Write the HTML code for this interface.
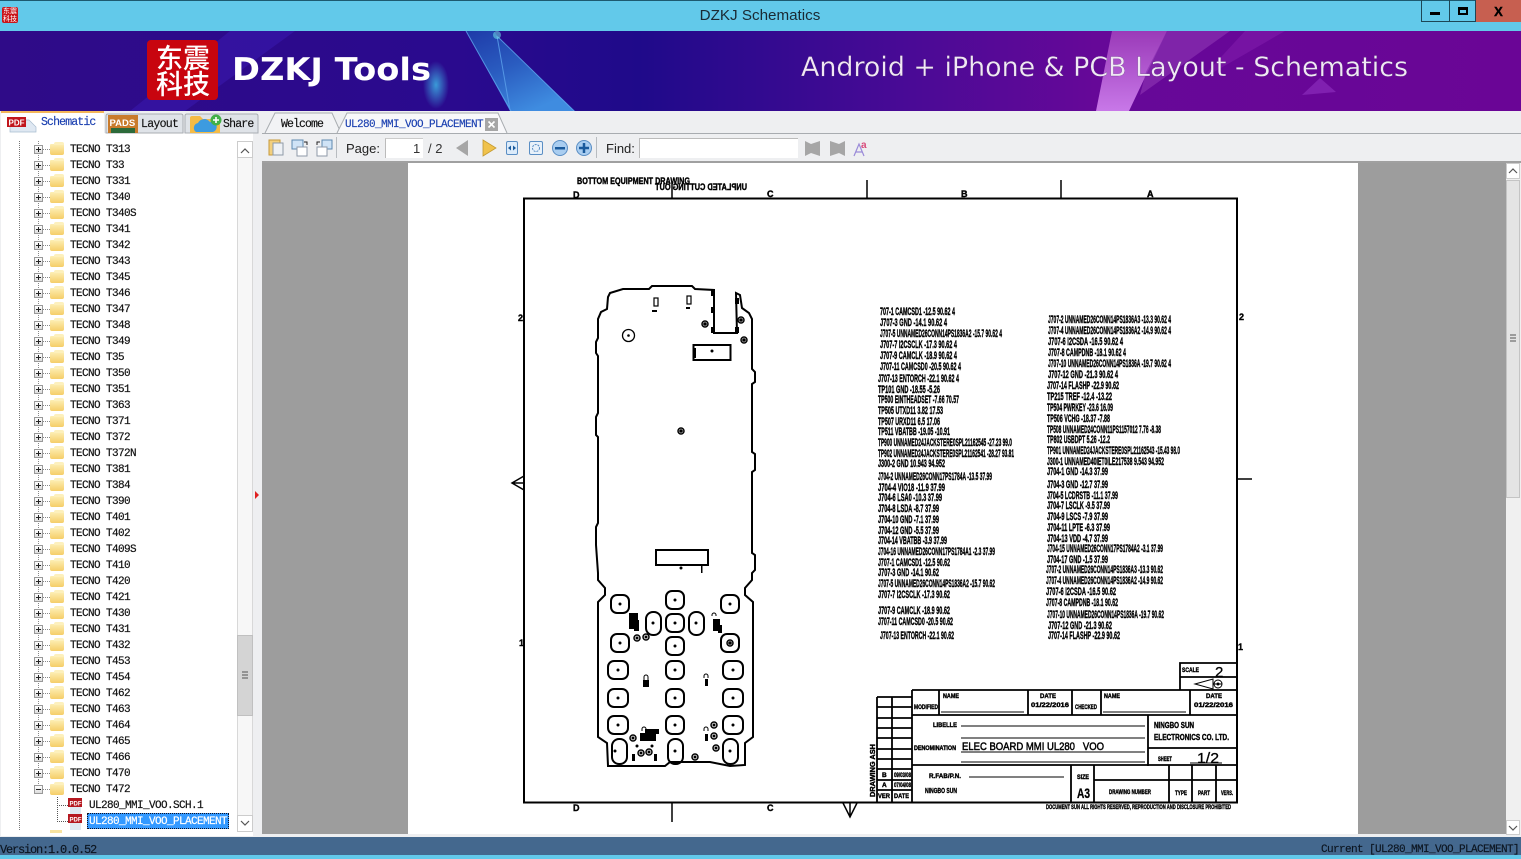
<!DOCTYPE html>
<html><head><meta charset="utf-8"><title>DZKJ Schematics</title>
<style>
html,body{margin:0;padding:0;width:1521px;height:859px;overflow:hidden;background:#62c9ea;font-family:"Liberation Sans",sans-serif}
.a{position:absolute}
svg{position:absolute;left:0;top:0;overflow:visible}
.r{position:absolute;left:0;width:236px;height:16px;font:11px/18px "Liberation Mono",monospace;letter-spacing:-.6px;color:#111;padding-left:70px;box-sizing:border-box;white-space:pre;-webkit-text-stroke:.2px #111}
.r b{position:absolute;left:34px;top:4px;width:9px;height:9px;box-sizing:border-box;border:1px solid #999;background:linear-gradient(#fff,#ddd)}
.r b:before{content:"";position:absolute;left:1px;top:3px;width:5px;height:1px;background:#222}
.r b:after{content:"";position:absolute;left:3px;top:1px;width:1px;height:5px;background:#222}
.r b.m:after{display:none}
.r u{position:absolute;left:43px;top:8px;width:7px;height:1px;background:repeating-linear-gradient(90deg,#888 0 1px,transparent 1px 2px)}
.r i{position:absolute;left:50px;top:3px;width:14px;height:11px;background:linear-gradient(#fdeeb4,#f5cd68);border-radius:1px 1px 2px 2px}
.r i:before{content:"";position:absolute;right:0;top:-2px;width:10px;height:3px;background:#fdf0bc;border-radius:2px 2px 0 0}
.p{position:absolute;font:11px/18px "Liberation Mono",monospace;letter-spacing:-.6px;white-space:pre;color:#111;-webkit-text-stroke:.2px currentColor}
.t{position:absolute;font:11px/14px "Liberation Mono",monospace;white-space:pre;-webkit-text-stroke:.15px currentColor}
.d text{font-family:"Liberation Sans",sans-serif;font-weight:700;font-size:11px;fill:#000;stroke:#000;stroke-width:.4}
</style></head>
<body>
<!-- title bar -->
<div class="a" style="left:0;top:0;width:1521px;height:31px;background:#62c9ea;border-top:1px solid #1d5a70;box-sizing:border-box"></div>
<div class="a" style="left:2px;top:7px;width:16px;height:16px;background:#c9151b;border-radius:2px;color:#fff;font:7px/8px 'Noto Sans CJK SC',sans-serif;text-align:center;word-break:break-all">东震科技</div>
<div class="a" style="left:600px;top:6px;width:320px;text-align:center;font-size:15.2px;line-height:19px;color:#1a2a33">DZKJ Schematics</div>
<div class="a" style="left:1421px;top:0;width:29px;height:22px;border:1px solid #1d4656;border-top:0;box-sizing:border-box"></div>
<div class="a" style="left:1430px;top:12px;width:10px;height:3px;background:#000"></div>
<div class="a" style="left:1449px;top:0;width:27px;height:22px;border:1px solid #1d4656;border-left:0;border-top:0;box-sizing:border-box"></div>
<div class="a" style="left:1458px;top:7px;width:10px;height:8px;border:2px solid #000;border-top-width:3px;box-sizing:border-box"></div>
<div class="a" style="left:1476px;top:0;width:45px;height:22px;background:#c75f50"></div>
<div class="a" style="left:1476px;top:1px;width:45px;text-align:center;font:700 13px/21px 'Liberation Sans',sans-serif;color:#000;-webkit-text-stroke:.4px #000">X</div>

<!-- banner -->
<svg width="1521" height="859" viewBox="0 0 1521 859">
<defs>
<linearGradient id="bg" x1="0" x2="1" y1="0" y2="0"><stop offset="0" stop-color="#2f0b88"/><stop offset=".3" stop-color="#2a0a8e"/><stop offset=".42" stop-color="#1f0a8a"/><stop offset=".6" stop-color="#4a0a96"/><stop offset=".72" stop-color="#660898"/><stop offset="1" stop-color="#6a0596"/></linearGradient>
<linearGradient id="bl" x1="0" x2=".6" y1="0" y2="1"><stop offset="0" stop-color="#1e3aa8"/><stop offset=".5" stop-color="#2a5cc0"/><stop offset="1" stop-color="#3f8ce0"/></linearGradient>
<linearGradient id="pk" x1="0" x2="0" y1="0" y2="1"><stop offset="0" stop-color="#9a3ab8"/><stop offset="1" stop-color="#c878e8"/></linearGradient>
<radialGradient id="gl"><stop offset="0" stop-color="#3a9ad8"/><stop offset="1" stop-color="#3a9ad8" stop-opacity="0"/></radialGradient>
</defs>
<rect x="0" y="31" width="1521" height="80" fill="url(#bg)"/>
<polygon points="230,31 295,31 185,111 130,111" fill="#3a1ab0" opacity=".55"/>
<polygon points="466,31 494,31 498,37 575,111 510,111" fill="url(#bl)"/>
<path d="M497 36L510 110M466 31L511 111M498 37L574 111" stroke="#5aa0ea" stroke-width="1" fill="none" opacity=".85"/>
<circle cx="497" cy="35" r="4" fill="#6fe0e8" opacity=".55"/>
<ellipse cx="436" cy="85" rx="13" ry="24" fill="url(#gl)"/>
<polygon points="1112,31 1167,31 1129,111 1096,111" fill="url(#pk)"/>
<polygon points="1167,31 1230,31 1140,95 1146,72" fill="#8a30b0" opacity=".7"/>
<polygon points="1245,31 1285,31 1200,80" fill="#7d18a8" opacity=".7"/>
<polygon points="1302,95 1320,78 1336,92" fill="#8020b0"/>
<text x="801" y="76" textLength="607" lengthAdjust="spacingAndGlyphs" font-family="'DejaVu Sans',sans-serif" font-size="27" fill="#f0e8f4" stroke="#3a1060" stroke-width=".2">Android + iPhone &amp; PCB Layout - Schematics</text>
<rect x="147" y="40" width="71" height="60" rx="4" fill="#c8050f"/>
<text x="232" y="80" textLength="199" lengthAdjust="spacingAndGlyphs" font-family="'DejaVu Sans',sans-serif" font-weight="700" font-size="31" fill="#fff">DZKJ Tools</text>
</svg>
<div class="a" style="left:152px;top:44px;width:62px;font:500 27px/26px 'Noto Sans CJK SC',sans-serif;color:#fff;word-break:break-all;text-align:center">东震<br>科技</div>

<!-- tab bar and toolbar backgrounds -->
<div class="a" style="left:0;top:111px;width:1521px;height:726px;background:#eeeff1"></div>
<div class="a" style="left:258px;top:133px;width:1263px;height:1px;background:#a8acb0"></div>
<div class="a" style="left:262px;top:161px;width:1259px;height:2px;background:#a0a0a0"></div>
<div class="a" style="left:385px;top:138px;width:38px;height:20px;background:#fff;border-left:1px solid #bbb;border-top:1px solid #ccc;box-sizing:border-box"></div>
<div class="a" style="left:639px;top:138px;width:159px;height:20px;background:#fff;border:1px solid #bbb;border-right:0;border-bottom:0;box-sizing:border-box"></div>
<!-- viewer area -->
<div class="a" style="left:262px;top:163px;width:1244px;height:671px;background:#9d9d9d"></div>
<div class="a" style="left:408px;top:163px;width:950px;height:671px;background:#fff"></div>
<!-- viewer scrollbar -->
<div class="a" style="left:1506px;top:163px;width:15px;height:671px;background:#f0f0f0"></div>
<div class="a" style="left:1506px;top:163px;width:14px;height:16px;background:#fff;border:1px solid #ccc;box-sizing:border-box"></div>
<div class="a" style="left:1506px;top:180px;width:14px;height:318px;background:#e4e4e4;border:1px solid #c4c4c4;box-sizing:border-box"></div>
<div class="a" style="left:1506px;top:820px;width:14px;height:15px;background:#fff;border:1px solid #ccc;box-sizing:border-box"></div>

<!-- left panel -->
<div class="a" style="left:1px;top:133px;width:252px;height:703px;background:#fff"></div>
<div class="a" style="left:253px;top:133px;width:9px;height:703px;background:#eeeff1"></div>
<div class="a" style="left:19px;top:141px;width:1px;height:690px;background:repeating-linear-gradient(#777 0 1px,transparent 1px 2px)"></div>
<div class="a" style="left:38px;top:141px;width:1px;height:648px;background:repeating-linear-gradient(#888 0 1px,transparent 1px 2px)"></div>
<div class="a" style="left:57px;top:797px;width:1px;height:24px;background:repeating-linear-gradient(#555 0 1px,transparent 1px 2px)"></div>
<div class="a" style="left:57px;top:805px;width:11px;height:1px;background:repeating-linear-gradient(90deg,#555 0 1px,transparent 1px 2px)"></div>
<div class="a" style="left:57px;top:821px;width:11px;height:1px;background:repeating-linear-gradient(90deg,#555 0 1px,transparent 1px 2px)"></div>

<div class="r" style="top:141px"><b></b><u></u><i></i>TECNO T313</div>
<div class="r" style="top:157px"><b></b><u></u><i></i>TECNO T33</div>
<div class="r" style="top:173px"><b></b><u></u><i></i>TECNO T331</div>
<div class="r" style="top:189px"><b></b><u></u><i></i>TECNO T340</div>
<div class="r" style="top:205px"><b></b><u></u><i></i>TECNO T340S</div>
<div class="r" style="top:221px"><b></b><u></u><i></i>TECNO T341</div>
<div class="r" style="top:237px"><b></b><u></u><i></i>TECNO T342</div>
<div class="r" style="top:253px"><b></b><u></u><i></i>TECNO T343</div>
<div class="r" style="top:269px"><b></b><u></u><i></i>TECNO T345</div>
<div class="r" style="top:285px"><b></b><u></u><i></i>TECNO T346</div>
<div class="r" style="top:301px"><b></b><u></u><i></i>TECNO T347</div>
<div class="r" style="top:317px"><b></b><u></u><i></i>TECNO T348</div>
<div class="r" style="top:333px"><b></b><u></u><i></i>TECNO T349</div>
<div class="r" style="top:349px"><b></b><u></u><i></i>TECNO T35</div>
<div class="r" style="top:365px"><b></b><u></u><i></i>TECNO T350</div>
<div class="r" style="top:381px"><b></b><u></u><i></i>TECNO T351</div>
<div class="r" style="top:397px"><b></b><u></u><i></i>TECNO T363</div>
<div class="r" style="top:413px"><b></b><u></u><i></i>TECNO T371</div>
<div class="r" style="top:429px"><b></b><u></u><i></i>TECNO T372</div>
<div class="r" style="top:445px"><b></b><u></u><i></i>TECNO T372N</div>
<div class="r" style="top:461px"><b></b><u></u><i></i>TECNO T381</div>
<div class="r" style="top:477px"><b></b><u></u><i></i>TECNO T384</div>
<div class="r" style="top:493px"><b></b><u></u><i></i>TECNO T390</div>
<div class="r" style="top:509px"><b></b><u></u><i></i>TECNO T401</div>
<div class="r" style="top:525px"><b></b><u></u><i></i>TECNO T402</div>
<div class="r" style="top:541px"><b></b><u></u><i></i>TECNO T409S</div>
<div class="r" style="top:557px"><b></b><u></u><i></i>TECNO T410</div>
<div class="r" style="top:573px"><b></b><u></u><i></i>TECNO T420</div>
<div class="r" style="top:589px"><b></b><u></u><i></i>TECNO T421</div>
<div class="r" style="top:605px"><b></b><u></u><i></i>TECNO T430</div>
<div class="r" style="top:621px"><b></b><u></u><i></i>TECNO T431</div>
<div class="r" style="top:637px"><b></b><u></u><i></i>TECNO T432</div>
<div class="r" style="top:653px"><b></b><u></u><i></i>TECNO T453</div>
<div class="r" style="top:669px"><b></b><u></u><i></i>TECNO T454</div>
<div class="r" style="top:685px"><b></b><u></u><i></i>TECNO T462</div>
<div class="r" style="top:701px"><b></b><u></u><i></i>TECNO T463</div>
<div class="r" style="top:717px"><b></b><u></u><i></i>TECNO T464</div>
<div class="r" style="top:733px"><b></b><u></u><i></i>TECNO T465</div>
<div class="r" style="top:749px"><b></b><u></u><i></i>TECNO T466</div>
<div class="r" style="top:765px"><b></b><u></u><i></i>TECNO T470</div>
<div class="r" style="top:781px"><b class="m"></b><u></u><i></i>TECNO T472</div>
<div class="a" style="left:50px;top:830px;width:12px;height:3px;background:#f8e3a0"></div>

<svg width="1521" height="859" viewBox="0 0 1521 859">
<g><rect x="70" y="802" width="11" height="12" fill="#dfe9f2"/><rect x="68" y="798" width="14" height="9" fill="#b51820"/><text x="69.5" y="805.5" font-size="6" font-weight="700" fill="#fff" font-family="'Liberation Sans',sans-serif">PDF</text></g>
<g><rect x="70" y="818" width="11" height="12" fill="#dfe9f2"/><rect x="68" y="814" width="14" height="9" fill="#b51820"/><text x="69.5" y="821.5" font-size="6" font-weight="700" fill="#fff" font-family="'Liberation Sans',sans-serif">PDF</text></g>
</svg>
<div class="p" style="left:89px;top:797px">UL280_MMI_VOO.SCH.1</div>
<div class="a" style="left:87px;top:813px;width:142px;height:16px;background:#3399ff;outline:1px dotted #112;outline-offset:-1px"></div>
<div class="p" style="left:89px;top:813px;color:#fff">UL280_MMI_VOO_PLACEMENT</div>

<!-- tree scrollbar -->
<div class="a" style="left:237px;top:141px;width:16px;height:691px;background:#f7f7f7;border:1px solid #d8d8d8;box-sizing:border-box"></div>
<div class="a" style="left:237px;top:141px;width:16px;height:17px;background:#fff;border:1px solid #ccc;box-sizing:border-box"></div>
<div class="a" style="left:237px;top:815px;width:16px;height:17px;background:#fff;border:1px solid #ccc;box-sizing:border-box"></div>
<div class="a" style="left:237px;top:635px;width:16px;height:81px;background:#d4d4d4;border:1px solid #c0c0c0;box-sizing:border-box"></div>

<!-- tabs, toolbar icons -->
<svg width="1521" height="859" viewBox="0 0 1521 859">
<path d="M241 153l4-4 4 4M241 821l4 4 4-4M1509 173l4-4 4 4M1509 826l4 4 4-4" fill="none" stroke="#555" stroke-width="1.2"/>
<path d="M242 672h6M242 675h6M242 678h6M1510 335h6M1510 338h6M1510 341h6" stroke="#555" stroke-width="1"/>
<polygon points="255,491 259,495 255,499" fill="#e02020"/>

<!-- Schematic tab -->
<path d="M1 133V115q0-3 3-3H101q3 0 3 3V133z" fill="#fff"/>
<rect x="1" y="111" width="103" height="2" fill="#f3b65a"/>
<path d="M10 132V120H29L36 127V132z" fill="#dfe8f2" stroke="#a8bccf" stroke-width=".7"/>
<rect x="7" y="117" width="19" height="10" fill="#c1151c"/>
<text x="8.5" y="125.5" font-size="8" font-weight="700" fill="#fff" font-family="'Liberation Sans',sans-serif">PDF</text>
<!-- Layout tab -->
<path d="M106 133V116q0-2 2-2H181q2 0 2 2V133z" fill="#dfe3e8" stroke="#a8acb2"/>
<rect x="108" y="115" width="30" height="18" fill="#c97b2c"/>
<rect x="111" y="128" width="24" height="5" fill="#2c6a3a"/>
<text x="109.5" y="126" font-size="9.5" font-weight="700" fill="#fff" font-family="'Liberation Sans',sans-serif">PADS</text>
<!-- Share tab -->
<path d="M185 133V116q0-2 2-2H256q2 0 2 2V133z" fill="#dfe3e8" stroke="#a8acb2"/>
<path d="M190 133V118q0-2 2-2h8l3 3h14q3 0 3 3v11z" fill="#f5bb45"/>
<path d="M196 132a5 5 0 0 1 2-9a7 7 0 0 1 12-1a5 5 0 0 1 3 10z" fill="#3d9be0"/>
<circle cx="216" cy="120" r="5.5" fill="#43b047"/><path d="M213 120h6M216 117v6" stroke="#fff" stroke-width="1.6"/>
<!-- doc tabs -->
<path d="M265 133L275 113H332L341 133" fill="#f2f3f5" stroke="#a8acb0"/>
<path d="M337 133L347 113H498L507 133" fill="#f8f8fa" stroke="#a8acb0"/>
<rect x="485" y="118" width="13" height="13" fill="#a6a6a6"/>
<path d="M488.500 121.500l6 6m0-6l-6 6" stroke="#fff" stroke-width="1.6"/>

<!-- toolbar -->
<g fill="none" stroke-width="1">
<rect x="269" y="140" width="11" height="15" fill="#f3d07e" stroke="#c79a3c"/><rect x="273" y="143" width="10" height="12" fill="#eef1f5" stroke="#8f9aa8"/>
<rect x="292" y="140" width="11" height="9" fill="#cfe3f6" stroke="#5d88b0"/><rect x="297" y="147" width="10" height="9" fill="#fff" stroke="#8f9aa8"/><path d="M304 142h3v3" stroke="#222"/>
<rect x="322" y="140" width="10" height="9" fill="#cfe3f6" stroke="#5d88b0"/><rect x="317" y="147" width="10" height="9" fill="#fff" stroke="#8f9aa8"/><path d="M320 142h-3v3" stroke="#222"/>
</g>
<path d="M336.500 137V158M596.500 137V158" stroke="#b8bcc0"/>
<text x="346" y="153" font-size="13" fill="#222" font-family="'Liberation Sans',sans-serif">Page:</text>
<text x="413" y="153" font-size="13" fill="#333" font-family="'Liberation Sans',sans-serif">1</text>
<text x="428" y="153" font-size="13" fill="#333" font-family="'Liberation Sans',sans-serif">/ 2</text>
<text x="606" y="153" font-size="13" fill="#222" font-family="'Liberation Sans',sans-serif">Find:</text>
<polygon points="468,140 468,156 456,148" fill="#a6a6a6"/>
<polygon points="483,140 483,156 496,148" fill="#f0c24c" stroke="#c49a30" stroke-width=".8"/>
<rect x="506.500" y="141.500" width="11" height="13" rx="1.500" fill="#dcebfa" stroke="#5a8ec4"/>
<path d="M508 148l3-2.500v5zM516 148l-3-2.500v5z" fill="#1a5a9c"/>
<rect x="529.500" y="141.500" width="13" height="13" rx="1.500" fill="#e8f1fa" stroke="#5a8ec4"/>
<circle cx="536" cy="148" r="3.500" fill="none" stroke="#5a8ec4" stroke-dasharray="2 1"/>
<circle cx="560" cy="148" r="7.500" fill="#a9cdf0" stroke="#5a8ec4"/><rect x="555" y="147" width="10" height="2.500" fill="#1a5a9c"/>
<circle cx="584" cy="148" r="7.500" fill="#a9cdf0" stroke="#5a8ec4"/><path d="M579 148h10M584 143v10" stroke="#1a5a9c" stroke-width="2.500"/>
<polygon points="805,141 811,144 820,141 820,156 811,153 805,156" fill="#a6a6a6"/>
<polygon points="830,141 839,144 845,141 845,156 839,153 830,156" fill="#a6a6a6"/>
<path d="M854 156l5-12 5 12M856 152h6" fill="none" stroke="#9a8ad8" stroke-width="1.200"/>
<text x="861" y="148" font-size="10" fill="#d84a7a" font-weight="700" font-family="'Liberation Sans',sans-serif">a</text>
</svg>
<div class="t" style="left:41px;top:116px;color:#1a3fb0;font-size:11.500px;letter-spacing:-.85px">Schematic</div>
<div class="t" style="left:141px;top:118px;color:#111;font-size:11.500px;letter-spacing:-.7px">Layout</div>
<div class="t" style="left:223px;top:118px;color:#111;font-size:11.500px;letter-spacing:-.8px">Share</div>
<div class="t" style="left:281px;top:118px;color:#111;font-size:11.500px;letter-spacing:-.9px">Welcome</div>
<div class="t" style="left:345px;top:118px;color:#1a3fb0;font-size:11px;letter-spacing:-.6px">UL280_MMI_VOO_PLACEMENT</div>

<!-- drawing -->
<svg class="d" width="1521" height="859" viewBox="0 0 1521 859">
<g fill="none" stroke="#000">
<rect x="524" y="198.500" width="713" height="604" stroke-width="2"/>
<path d="M672 183V198M867 180V198M1061 180V198M672 802V822M1237 479H1252" stroke-width="1.500"/>
<path d="M524 476L512 483L524 490M524 483H512M843 803L850 817L857 803M850 803V817" stroke-width="1.500"/>
<!-- board outline -->
<path stroke-width="2" d="M714 290V333H737L736 293L740 295L742 308L749 313L752 319V369L755 372V382L752 384V452L755 454V470L752 472V553L755 555V570L752 573V580L745 588V595L753 602V737L745 743V765L730 766L710 762H670L665 766H608L607 743L598 737V602L605 595V588L598 580V573L596 545V527L598 523V437L596 435V417L598 413V356L596 353V342L598 338V319L601 312L607 309L608 297L610 293L623 289H649L652 286H692L695 289z"/>
<circle cx="628.500" cy="335.500" r="6" stroke-width="1.300"/>
<rect x="693.500" y="345" width="37" height="15" stroke-width="2"/>
<rect x="656" y="550" width="52" height="15" stroke-width="2"/>
<rect x="654" y="298" width="4" height="8" stroke-width="1.200"/>
<rect x="687" y="296" width="4" height="8" stroke-width="1.200"/>
<g stroke-width="2">
<rect x="611" y="595" width="18" height="18" rx="6"/><rect x="666" y="591" width="18" height="18" rx="6"/><rect x="721" y="595" width="18" height="18" rx="6"/>
<rect x="646" y="612" width="15" height="23" rx="7"/><rect x="666" y="614" width="18" height="18" rx="6"/><rect x="689" y="612" width="15" height="23" rx="7"/>
<rect x="611" y="634" width="18" height="18" rx="6"/><rect x="666" y="637" width="18" height="18" rx="6"/><rect x="721" y="634" width="18" height="18" rx="6"/>
<rect x="608" y="661" width="20" height="18" rx="6"/><rect x="666" y="661" width="18" height="18" rx="6"/><rect x="723" y="661" width="20" height="18" rx="6"/>
<rect x="608" y="689" width="20" height="18" rx="6"/><rect x="666" y="689" width="18" height="18" rx="6"/><rect x="723" y="689" width="20" height="18" rx="6"/>
<rect x="608" y="716" width="20" height="18" rx="6"/><rect x="666" y="716" width="18" height="18" rx="6"/><rect x="723" y="716" width="20" height="18" rx="6"/>
<rect x="612" y="739" width="15" height="25" rx="7"/><rect x="668" y="739" width="15" height="25" rx="7"/><rect x="723" y="739" width="15" height="25" rx="7"/>
</g>
<g stroke-width="1.500">
<circle cx="705" cy="324" r="3"/><circle cx="741" cy="320" r="3"/><circle cx="744" cy="340" r="3"/><circle cx="681" cy="431" r="3"/>
<circle cx="637" cy="638" r="3"/><circle cx="646" cy="637" r="3"/><circle cx="730" cy="643" r="3"/>
<circle cx="633" cy="738" r="3"/><circle cx="641" cy="753" r="3"/><circle cx="649" cy="752" r="3"/><circle cx="695" cy="757" r="3"/><circle cx="714" cy="725" r="3"/><circle cx="714" cy="736" r="3"/><circle cx="716" cy="748" r="3"/>
</g>
<g stroke-width="1">
<path d="M644 680v-3a2 2 0 0 1 4 0v3M704 678v-2a2 2 0 0 1 4 0v2M642 731v-2a2 2 0 0 1 4 0v2M704 731v-2a2 2 0 0 1 4 0v2M712 616v-1a2 2 0 0 1 4 0v1"/>
</g>
<!-- title block -->
<g stroke-width="1.800">
<path d="M1180 690V663H1236M1180 677H1236"/>
<path d="M912 690H1237M912 715H1237M912 690V802M939 690V715M1028 690V715M1072 690V715M1101 690V715M1190 690V715"/>
<path d="M1148 715V766M912 765H1237M1148 748H1237M1071 765V802M1094 765V802M1094 780H1237M1169 765V802M1192 765V802M1216 765V802"/>
<path d="M877 697H912M877 697V802M892 697V802M877 707H912M877 718H912M877 728H912M877 738H912M877 749H912M877 759H912M877 769H912M877 780H912M877 790H912"/>
</g>
<g stroke-width="1">
<path d="M941 712H1024M1103 712H1186M961 726H1145M961 738H1145M961 752H1145M961 762H1145M969 777H1064M1190 763H1222"/>
<path d="M1195 684L1213 679V689zM1213 684H1222"/><circle cx="1218" cy="684" r="4"/>
</g>
</g>
<g fill="#000">
<circle cx="628.500" cy="335.500" r="1.300"/><rect x="652" y="310" width="5" height="2"/><rect x="686" y="307" width="4" height="2"/>
<rect x="711" y="290" width="4" height="6"/><rect x="711" y="307" width="4" height="6"/><rect x="711" y="327" width="4" height="6"/><rect x="735" y="298" width="4" height="6"/><rect x="735" y="327" width="4" height="6"/>
<circle cx="712" cy="351" r="1.500"/><rect x="694" y="348" width="2" height="10"/>
<circle cx="681" cy="568" r="1.500"/><rect x="701" y="565" width="1.500" height="8"/>
<circle cx="620" cy="604" r="1.500"/><circle cx="675" cy="600" r="1.500"/><circle cx="730" cy="604" r="1.500"/><circle cx="653" cy="623" r="1.500"/><circle cx="675" cy="623" r="1.500"/><circle cx="696" cy="623" r="1.500"/><circle cx="620" cy="643" r="1.500"/><circle cx="675" cy="646" r="1.500"/><circle cx="618" cy="670" r="1.500"/><circle cx="675" cy="670" r="1.500"/><circle cx="733" cy="670" r="1.500"/><circle cx="618" cy="698" r="1.500"/><circle cx="675" cy="698" r="1.500"/><circle cx="733" cy="698" r="1.500"/><circle cx="618" cy="725" r="1.500"/><circle cx="675" cy="725" r="1.500"/><circle cx="733" cy="725" r="1.500"/><circle cx="615" cy="751" r="1.500"/><circle cx="675" cy="751" r="1.500"/><circle cx="730" cy="751" r="1.500"/>
<circle cx="681" cy="431" r="1.800"/><circle cx="705" cy="324" r="1.800"/><circle cx="741" cy="320" r="1.800"/><circle cx="744" cy="340" r="1.800"/><circle cx="730" cy="643" r="1.800"/><circle cx="637" cy="638" r="1.500"/><circle cx="646" cy="637" r="1.500"/><circle cx="633" cy="738" r="1.500"/><circle cx="641" cy="753" r="1.500"/><circle cx="649" cy="752" r="1.500"/><circle cx="695" cy="757" r="1.500"/><circle cx="714" cy="725" r="1.500"/><circle cx="714" cy="736" r="1.500"/><circle cx="716" cy="748" r="1.500"/>
<rect x="629" y="613" width="9" height="16"/><rect x="634" y="620" width="5" height="11"/><rect x="713" y="619" width="7" height="12"/><rect x="718" y="625" width="4" height="8"/>
<rect x="643" y="680" width="6" height="7"/><rect x="705" y="679" width="3" height="7"/><rect x="705" y="734" width="3" height="7"/>
<rect x="640" y="733" width="16" height="8"/><rect x="645" y="729" width="14" height="5"/>
<circle cx="637" cy="746" r="1.500"/><circle cx="652" cy="746" r="1.500"/><rect x="632" y="754" width="3" height="7"/><rect x="654" y="754" width="3" height="7"/>
<circle cx="1218" cy="684" r="1.500"/>
</g>
<text x="577" y="184" textLength="113" lengthAdjust="spacingAndGlyphs" style="font-size:9px">BOTTOM EQUIPMENT DRAWING</text>
<text transform="translate(747 0) scale(-1 1)" x="0" y="190" textLength="92" lengthAdjust="spacingAndGlyphs" style="font-size:9px">UNPLATED CUTTING OUT</text>
<text x="573" y="198" style="font-size:9px">D</text><text x="767" y="197" style="font-size:9px">C</text><text x="961" y="197" style="font-size:9px">B</text><text x="1147" y="197" style="font-size:9px">A</text>
<text x="573" y="811" style="font-size:9px">D</text><text x="767" y="811" style="font-size:9px">C</text>
<text x="518" y="321" style="font-size:9px">2</text><text x="1239" y="320" style="font-size:9px">2</text><text x="519" y="646" style="font-size:9px">1</text><text x="1238" y="650" style="font-size:9px">1</text>

<text x="880" y="315" textLength="75" lengthAdjust="spacingAndGlyphs">707-1 CAMCSD1 -12.5 90.62 4</text>
<text x="880" y="326" textLength="67" lengthAdjust="spacingAndGlyphs">J707-3 GND -14.1 90.62 4</text>
<text x="880" y="337" textLength="122" lengthAdjust="spacingAndGlyphs">J707-5 UNNAMED26CONN14PS1836A2 -15.7 90.62 4</text>
<text x="880" y="348" textLength="77" lengthAdjust="spacingAndGlyphs">J707-7 I2CSCLK -17.3 90.62 4</text>
<text x="880" y="359" textLength="77" lengthAdjust="spacingAndGlyphs">J707-9 CAMCLK -18.9 90.62 4</text>
<text x="880" y="370" textLength="81" lengthAdjust="spacingAndGlyphs">J707-11 CAMCSD0 -20.5 90.62 4</text>
<text x="878" y="382" textLength="81" lengthAdjust="spacingAndGlyphs">J707-13 ENTORCH -22.1 90.62 4</text>
<text x="878" y="393" textLength="62" lengthAdjust="spacingAndGlyphs">TP101 GND -18.55 -5.26</text>
<text x="878" y="403" textLength="81" lengthAdjust="spacingAndGlyphs">TP500 EINTHEADSET -7.66 70.57</text>
<text x="878" y="414" textLength="65" lengthAdjust="spacingAndGlyphs">TP505 UTXD11 3.82 17.53</text>
<text x="878" y="425" textLength="62" lengthAdjust="spacingAndGlyphs">TP507 URXD11 6.5 17.06</text>
<text x="878" y="435" textLength="72" lengthAdjust="spacingAndGlyphs">TP511 VBATBB -19.05 -10.91</text>
<text x="878" y="446" textLength="134" lengthAdjust="spacingAndGlyphs">TP900 UNNAMED24JACKSTERE0SPL21162545 -27.23 99.0</text>
<text x="878" y="457" textLength="136" lengthAdjust="spacingAndGlyphs">TP902 UNNAMED24JACKSTERE0SPL21162541 -28.27 93.81</text>
<text x="878" y="467" textLength="67" lengthAdjust="spacingAndGlyphs">J300-2 GND 10.943 94.952</text>
<text x="878" y="480" textLength="114" lengthAdjust="spacingAndGlyphs">J704-2 UNNAMED26CONN17PS1784A -13.5 37.99</text>
<text x="878" y="491" textLength="67" lengthAdjust="spacingAndGlyphs">J704-4 VIO18 -11.9 37.99</text>
<text x="878" y="501" textLength="64" lengthAdjust="spacingAndGlyphs">J704-6 LSA0 -10.3 37.99</text>
<text x="878" y="512" textLength="61" lengthAdjust="spacingAndGlyphs">J704-8 LSDA -8.7 37.99</text>
<text x="878" y="523" textLength="61" lengthAdjust="spacingAndGlyphs">J704-10 GND -7.1 37.99</text>
<text x="878" y="534" textLength="61" lengthAdjust="spacingAndGlyphs">J704-12 GND -5.5 37.99</text>
<text x="878" y="544" textLength="69" lengthAdjust="spacingAndGlyphs">J704-14 VBATBB -3.9 37.99</text>
<text x="878" y="555" textLength="117" lengthAdjust="spacingAndGlyphs">J704-16 UNNAMED26CONN17PS1784A1 -2.3 37.99</text>
<text x="878" y="566" textLength="72" lengthAdjust="spacingAndGlyphs">J707-1 CAMCSD1 -12.5 90.62</text>
<text x="878" y="576" textLength="61" lengthAdjust="spacingAndGlyphs">J707-3 GND -14.1 90.62</text>
<text x="878" y="587" textLength="117" lengthAdjust="spacingAndGlyphs">J707-5 UNNAMED26CONN14PS1836A2 -15.7 90.62</text>
<text x="878" y="598" textLength="72" lengthAdjust="spacingAndGlyphs">J707-7 I2CSCLK -17.3 90.62</text>
<text x="878" y="614" textLength="72" lengthAdjust="spacingAndGlyphs">J707-9 CAMCLK -18.9 90.62</text>
<text x="878" y="625" textLength="75" lengthAdjust="spacingAndGlyphs">J707-11 CAMCSD0 -20.5 90.62</text>
<text x="880" y="639" textLength="74" lengthAdjust="spacingAndGlyphs">J707-13 ENTORCH -22.1 90.62</text>

<text x="1048" y="323" textLength="123" lengthAdjust="spacingAndGlyphs">J707-2 UNNAMED26CONN14PS1836A3 -13.3 90.62 4</text>
<text x="1048" y="334" textLength="123" lengthAdjust="spacingAndGlyphs">J707-4 UNNAMED26CONN14PS1836A2 -14.9 90.62 4</text>
<text x="1048" y="345" textLength="75" lengthAdjust="spacingAndGlyphs">J707-6 I2CSDA -16.5 90.62 4</text>
<text x="1048" y="356" textLength="78" lengthAdjust="spacingAndGlyphs">J707-8 CAMPDNB -18.1 90.62 4</text>
<text x="1048" y="367" textLength="123" lengthAdjust="spacingAndGlyphs">J707-10 UNNAMED26CONN14PS1836A -19.7 90.62 4</text>
<text x="1048" y="378" textLength="70" lengthAdjust="spacingAndGlyphs">J707-12 GND -21.3 90.62 4</text>
<text x="1047" y="389" textLength="72" lengthAdjust="spacingAndGlyphs">J707-14 FLASHP -22.9 90.62</text>
<text x="1047" y="400" textLength="65" lengthAdjust="spacingAndGlyphs">TP215 TREF -12.4 -13.22</text>
<text x="1047" y="411" textLength="66" lengthAdjust="spacingAndGlyphs">TP504 PWRKEY -23.6 16.09</text>
<text x="1047" y="422" textLength="63" lengthAdjust="spacingAndGlyphs">TP506 VCHG -18.37 -7.88</text>
<text x="1047" y="433" textLength="114" lengthAdjust="spacingAndGlyphs">TP508 UNNAMED24CONN11PS1157012 7.76 -8.38</text>
<text x="1047" y="443" textLength="63" lengthAdjust="spacingAndGlyphs">TP802 USBDPT 5.26 -12.2</text>
<text x="1047" y="454" textLength="133" lengthAdjust="spacingAndGlyphs">TP901 UNNAMED24JACKSTERE0SPL21162543 -15.43 98.0</text>
<text x="1047" y="465" textLength="117" lengthAdjust="spacingAndGlyphs">J300-1 UNNAMED40IET0ILE217538 9.543 94.952</text>
<text x="1047" y="475" textLength="61" lengthAdjust="spacingAndGlyphs">J704-1 GND -14.3 37.99</text>
<text x="1047" y="488" textLength="61" lengthAdjust="spacingAndGlyphs">J704-3 GND -12.7 37.99</text>
<text x="1047" y="499" textLength="71" lengthAdjust="spacingAndGlyphs">J704-5 LCDRSTB -11.1 37.99</text>
<text x="1047" y="509" textLength="63" lengthAdjust="spacingAndGlyphs">J704-7 LSCLK -9.5 37.99</text>
<text x="1047" y="520" textLength="61" lengthAdjust="spacingAndGlyphs">J704-9 LSCS -7.9 37.99</text>
<text x="1047" y="531" textLength="63" lengthAdjust="spacingAndGlyphs">J704-11 LPTE -6.3 37.99</text>
<text x="1047" y="542" textLength="61" lengthAdjust="spacingAndGlyphs">J704-13 VDD -4.7 37.99</text>
<text x="1047" y="552" textLength="116" lengthAdjust="spacingAndGlyphs">J704-15 UNNAMED26CONN17PS1784A2 -3.1 37.99</text>
<text x="1047" y="563" textLength="61" lengthAdjust="spacingAndGlyphs">J704-17 GND -1.5 37.99</text>
<text x="1046" y="573" textLength="117" lengthAdjust="spacingAndGlyphs">J707-2 UNNAMED26CONN14PS1836A3 -13.3 90.62</text>
<text x="1046" y="584" textLength="117" lengthAdjust="spacingAndGlyphs">J707-4 UNNAMED26CONN14PS1836A2 -14.9 90.62</text>
<text x="1046" y="595" textLength="70" lengthAdjust="spacingAndGlyphs">J707-6 I2CSDA -16.5 90.62</text>
<text x="1046" y="606" textLength="72" lengthAdjust="spacingAndGlyphs">J707-8 CAMPDNB -18.1 90.62</text>
<text x="1047" y="618" textLength="117" lengthAdjust="spacingAndGlyphs">J707-10 UNNAMED26CONN14PS1836A -19.7 90.62</text>
<text x="1048" y="629" textLength="64" lengthAdjust="spacingAndGlyphs">J707-12 GND -21.3 90.62</text>
<text x="1048" y="639" textLength="72" lengthAdjust="spacingAndGlyphs">J707-14 FLASHP -22.9 90.62</text>

<g>
<text x="1182" y="672" textLength="17" lengthAdjust="spacingAndGlyphs" style="font-size:6.5px">SCALE</text>
<text x="914" y="709" textLength="24" lengthAdjust="spacingAndGlyphs" style="font-size:6.5px">MODIFIED</text>
<text x="943" y="698" textLength="16" lengthAdjust="spacingAndGlyphs" style="font-size:6.5px">NAME</text>
<text x="1040" y="698" textLength="16" lengthAdjust="spacingAndGlyphs" style="font-size:6.5px">DATE</text>
<text x="1031" y="707" textLength="38" lengthAdjust="spacingAndGlyphs" style="font-size:6.5px">01/22/2016</text>
<text x="1075" y="709" textLength="22" lengthAdjust="spacingAndGlyphs" style="font-size:6.5px">CHECKED</text>
<text x="1104" y="698" textLength="16" lengthAdjust="spacingAndGlyphs" style="font-size:6.5px">NAME</text>
<text x="1206" y="698" textLength="16" lengthAdjust="spacingAndGlyphs" style="font-size:6.5px">DATE</text>
<text x="1194" y="707" textLength="39" lengthAdjust="spacingAndGlyphs" style="font-size:6.5px">01/22/2016</text>
<text x="933" y="727" textLength="24" lengthAdjust="spacingAndGlyphs" style="font-size:6.5px">LIBELLE</text>
<text x="914" y="750" textLength="42" lengthAdjust="spacingAndGlyphs" style="font-size:6.5px">DENOMINATION</text>
<text x="929" y="778" textLength="32" lengthAdjust="spacingAndGlyphs" style="font-size:6.5px">R.FAB/P.N.</text>
<text x="925" y="793" textLength="32" lengthAdjust="spacingAndGlyphs" style="font-size:7.5px">NINGBO SUN</text>
<text x="1154" y="728" textLength="40" lengthAdjust="spacingAndGlyphs" style="font-size:8px">NINGBO SUN</text>
<text x="1154" y="740" textLength="75" lengthAdjust="spacingAndGlyphs" style="font-size:8px">ELECTRONICS CO. LTD.</text>
<text x="1158" y="761" textLength="14" lengthAdjust="spacingAndGlyphs" style="font-size:6.5px">SHEET</text>
<text x="1077" y="779" textLength="12" lengthAdjust="spacingAndGlyphs" style="font-size:6.5px">SIZE</text>
<text x="1109" y="794" textLength="42" lengthAdjust="spacingAndGlyphs" style="font-size:6.5px">DRAWING NUMBER</text>
<text x="1175" y="795" textLength="12" lengthAdjust="spacingAndGlyphs" style="font-size:6.5px">TYPE</text>
<text x="1198" y="795" textLength="12" lengthAdjust="spacingAndGlyphs" style="font-size:6.5px">PART</text>
<text x="1221" y="795" textLength="12" lengthAdjust="spacingAndGlyphs" style="font-size:6.5px">VERS.</text>
<text x="882" y="777" style="font-size:6.5px">B</text>
<text x="882" y="787" style="font-size:6.5px">A</text>
<text x="894" y="777" textLength="17" lengthAdjust="spacingAndGlyphs" style="font-size:6.5px">09/03/08</text>
<text x="894" y="787" textLength="17" lengthAdjust="spacingAndGlyphs" style="font-size:6.5px">07/04/08</text>
<text x="878" y="798" textLength="12" lengthAdjust="spacingAndGlyphs" style="font-size:6.5px">VER</text>
<text x="894" y="798" textLength="15" lengthAdjust="spacingAndGlyphs" style="font-size:6.5px">DATE</text>
<text x="1046" y="809" textLength="185" lengthAdjust="spacingAndGlyphs" style="font-size:6.5px">DOCUMENT SUN ALL RIGHTS RESERVED, REPRODUCTION AND DISCLOSURE PROHIBITED</text>
<text transform="translate(875 797) rotate(-90)" textLength="53" lengthAdjust="spacingAndGlyphs" style="font-size:7px">DRAWING ASH</text>
</g>
<g>
<text x="962" y="750" textLength="142" lengthAdjust="spacingAndGlyphs" xml:space="preserve" style="font-size:11px;font-weight:400;stroke-width:.5;white-space:pre">ELEC BOARD MMI UL280   VOO</text>
<text x="1215" y="677" style="font-size:15px;font-weight:400;stroke-width:.3">2</text>
<text x="1197" y="763" textLength="22" lengthAdjust="spacingAndGlyphs" style="font-size:15px;font-weight:400;stroke-width:.3">1/2</text>
<text x="1077" y="798" textLength="13" lengthAdjust="spacingAndGlyphs" style="font-size:14px;stroke-width:.3">A3</text>
</g>
</svg>

<!-- status bar -->
<div class="a" style="left:0;top:837px;width:1521px;height:18px;background:#44688e"></div>
<div class="a" style="left:0;top:855px;width:1521px;height:4px;background:#62c9ea"></div>
<div class="t" style="left:0;top:843px;font-size:12px;letter-spacing:-1.200px;color:#0c1520">Version:1.0.0.52</div>
<div class="t" style="left:1321px;top:843px;font-size:11px;letter-spacing:-.6px;color:#0c1520">Current [UL280_MMI_VOO_PLACEMENT]</div>
</body></html>
